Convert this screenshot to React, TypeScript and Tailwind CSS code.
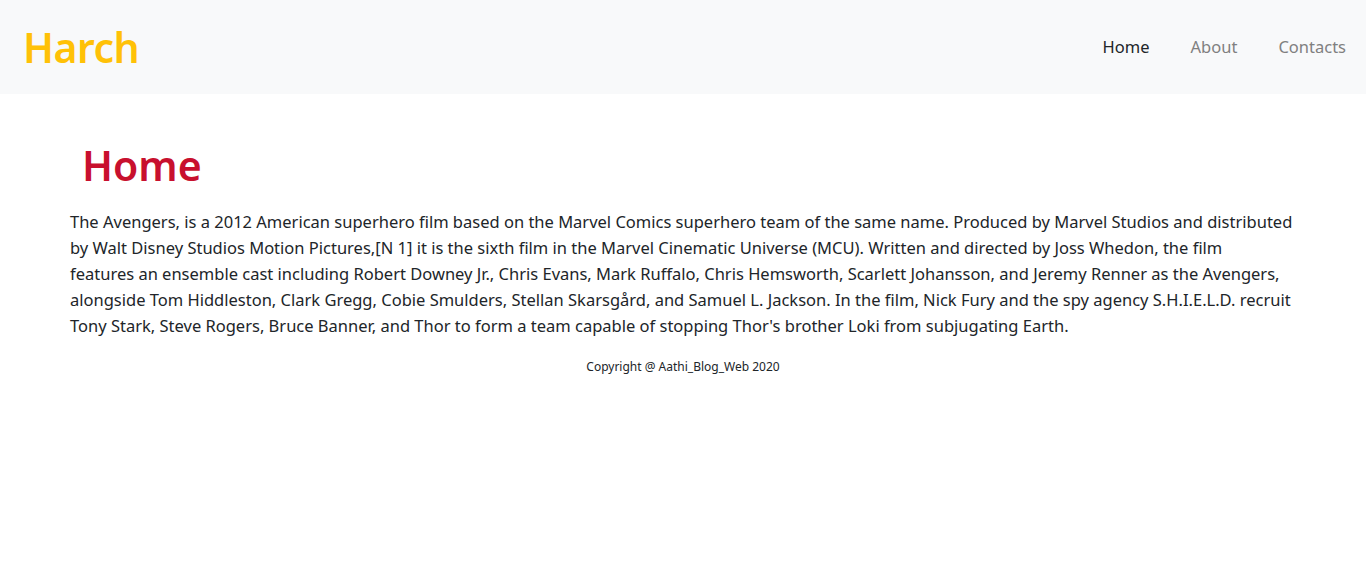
import React from 'react';

const lines = [
  'The Avengers, is a 2012 American superhero film based on the Marvel Comics superhero team of the same name. Produced by Marvel Studios and distributed',
  'by Walt Disney Studios Motion Pictures,[N 1] it is the sixth film in the Marvel Cinematic Universe (MCU). Written and directed by Joss Whedon, the film',
  'features an ensemble cast including Robert Downey Jr., Chris Evans, Mark Ruffalo, Chris Hemsworth, Scarlett Johansson, and Jeremy Renner as the Avengers,',
  'alongside Tom Hiddleston, Clark Gregg, Cobie Smulders, Stellan Skarsgård, and Samuel L. Jackson. In the film, Nick Fury and the spy agency S.H.I.E.L.D. recruit',
  "Tony Stark, Steve Rogers, Bruce Banner, and Thor to form a team capable of stopping Thor's brother Loki from subjugating Earth.",
];

export default function App() {
  return (
    <div className="min-h-[583px] bg-white font-['Noto_Sans',sans-serif] text-[#212529]">
      <nav className="h-[94px] bg-[#f8f9fa] flex items-center justify-between pl-[23px] pr-[20px]">
        <a className="text-[41px] font-semibold text-[#ffc107] leading-none tracking-[-0.5px]">Harch</a>
        <ul className="flex items-center gap-[41px] text-[16.5px]">
          <li className="text-[#212529]">Home</li>
          <li className="text-[#808080]">About</li>
          <li className="text-[#808080]">Contacts</li>
        </ul>
      </nav>
      <main className="px-[70px] pt-[46px]">
        <h1 className="pl-[12px] text-[41px] font-semibold text-[#c8102e] leading-tight">Home</h1>
        <p className="mt-[18px] text-[16.5px] leading-[26px] whitespace-nowrap">
          {lines.map((l, i) => (
            <span key={i} className="block">{l}</span>
          ))}
        </p>
        <footer className="mt-[19px] text-center text-[12px]">Copyright @ Aathi_Blog_Web 2020</footer>
      </main>
    </div>
  );
}
